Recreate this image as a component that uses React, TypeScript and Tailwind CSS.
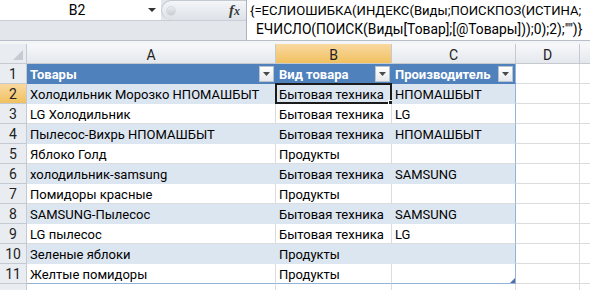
import React from "react";

const rows: [string, string, string][] = [
    ["Холодильник Морозко НПОМАШБЫТ", "Бытовая техника", "НПОМАШБЫТ"],
    ["LG Холодильник", "Бытовая техника", "LG"],
    ["Пылесос-Вихрь НПОМАШБЫТ", "Бытовая техника", "НПОМАШБЫТ"],
    ["Яблоко Голд", "Продукты", ""],
    ["холодильник-samsung", "Бытовая техника", "SAMSUNG"],
    ["Помидоры красные", "Продукты", ""],
    ["SAMSUNG-Пылесос", "Бытовая техника", "SAMSUNG"],
    ["LG пылесос", "Бытовая техника", "LG"],
    ["Зеленые яблоки", "Продукты", ""],
    ["Желтые помидоры", "Продукты", ""],
];

function FilterButton() {
    return (
        <div className="ml-auto mr-[2px] w-[15px] h-[16px] flex items-center justify-center bg-gradient-to-b from-white to-[#e6e9ed] border border-[#b9c3cf]">
            <svg width="7" height="4" viewBox="0 0 7 4">
                <path d="M0 0h7L3.5 4z" fill="#4a4a4a" />
            </svg>
        </div>
    );
}

function RowHeader({ n, active }: { n?: number; active?: boolean }) {
    return (
        <div
            className={`w-[27px] shrink-0 flex items-center justify-center pt-[2px] border-r border-b border-[#c5cad1] text-[14px] text-[#222] ${
                active
                    ? "bg-gradient-to-b from-[#f9d99f] to-[#f1c15f]"
                    : "bg-[#e9ecf0]"
            }`}
        >
            {n}
        </div>
    );
}

export default function App() {
    return (
        <div className="w-[590px] h-[290px] overflow-hidden bg-white font-['Roboto',sans-serif] text-[13px] text-black">
            {/* Formula bar */}
            <div className="flex h-[41px] bg-[#e3e7ec] border-b border-[#b7bec8]">
                <div className="w-[246px] shrink-0 flex flex-col">
                    <div className="flex h-[21px] border-b border-[#c9ced6]">
                        <div className="w-[161px] bg-white flex items-center relative">
                            <span className="flex-1 text-center pl-[6px] text-[14px]">B2</span>
                            <svg width="8" height="4" viewBox="0 0 8 4" className="mr-[5px]">
                                <path d="M0 0h8L4 4z" fill="#333" />
                            </svg>
                        </div>
                        <div className="flex-1 flex items-center rounded-l-[11px] border-l border-t border-[#c3c9d1] bg-gradient-to-b from-[#f4f6f8] to-[#dde2e8]">
                            <div className="ml-[4px] w-[10px] h-[10px] rounded-full bg-gradient-to-b from-[#e9ecef] to-[#c8cdd3] border border-[#d7dbe0]" />
                            <span className="ml-auto mr-[6px] font-['Liberation_Serif',serif] italic font-bold text-[15px] text-[#3a3a3a]">
                                f<span className="text-[12px]">x</span>
                            </span>
                        </div>
                    </div>
                    <div className="flex-1" />
                </div>
                <div className="flex-1 bg-white border-l border-[#a9b2bd] flex flex-col pt-[1px] leading-[19px] whitespace-nowrap overflow-hidden">
                    <div className="pl-[3px] text-[13.1px]">{"{=ЕСЛИОШИБКА(ИНДЕКС(Виды;ПОИСКПОЗ(ИСТИНА;"}</div>
                    <div className="pl-[9px] text-[13.8px]">{'ЕЧИСЛО(ПОИСК(Виды[Товар];[@Товары]));0);2);"")}'}</div>
                </div>
            </div>
            <div className="h-[3px] bg-[#f4f5f7]" />

            {/* Column headers */}
            <div className="flex h-[20px] text-[14px] text-[#222]">
                <div className="w-[27px] shrink-0 relative border-r border-b border-[#c5cad1] bg-[#e9ecf0]">
                    <svg width="10" height="10" viewBox="0 0 10 10" className="absolute right-[3px] bottom-[3px]">
                        <path d="M10 0V10H0z" fill="#c6cbd1" />
                    </svg>
                </div>
                <div className="w-[249px] shrink-0 flex items-center justify-center pt-[3px] border-r border-b border-[#c5cad1] bg-gradient-to-b from-[#f7f8fa] to-[#e4e8ed]">A</div>
                <div className="w-[116px] shrink-0 flex items-center justify-center pt-[3px] border-r border-b border-[#c5cad1] bg-gradient-to-b from-[#f9d99f] to-[#f1c15f]">B</div>
                <div className="w-[124px] shrink-0 flex items-center justify-center pt-[3px] border-r border-b border-[#c5cad1] bg-gradient-to-b from-[#f7f8fa] to-[#e4e8ed]">C</div>
                <div className="w-[64px] shrink-0 flex items-center justify-center pt-[3px] border-r border-b border-[#c5cad1] bg-gradient-to-b from-[#f7f8fa] to-[#e4e8ed]">D</div>
                <div className="flex-1 border-b border-[#c5cad1] bg-gradient-to-b from-[#f7f8fa] to-[#e4e8ed]" />
            </div>

            {/* Row 1: table header */}
            <div className="flex h-[20px]">
                <RowHeader n={1} />
                <div className="w-[249px] shrink-0 flex items-center pl-[3px] bg-[#4f81bd] text-white font-bold border-b border-[#4f81bd]">
                    <span className="pt-[2px]">Товары</span>
                    <FilterButton />
                </div>
                <div className="w-[116px] shrink-0 flex items-center pl-[3px] bg-[#4f81bd] text-white font-bold border-b border-[#4f81bd]">
                    <span className="pt-[2px]">Вид товара</span>
                    <FilterButton />
                </div>
                <div className="w-[124px] shrink-0 flex items-center pl-[3px] bg-[#4f81bd] text-white font-bold border-r border-b border-r-[#95b3d7] border-b-[#4f81bd]">
                    <span className="pt-[2px]">Производитель</span>
                    <FilterButton />
                </div>
                <div className="w-[64px] shrink-0 border-r border-b border-[#dadcdd]" />
                <div className="flex-1 border-b border-[#dadcdd]" />
            </div>

            {/* Data rows */}
            {rows.map((r, i) => {
                const n = i + 2;
                const band = n % 2 === 0;
                const last = n === 11;
                const cell = band
                    ? "bg-[#dce6f1] border-[#dce6f1]"
                    : "bg-white border-[#dadcdd]";
                const bottom = last ? "border-b-[#95b3d7]" : "";
                return (
                    <div key={n} className="flex h-[20px]">
                        <RowHeader n={n} active={n === 2} />
                        <div className={`w-[249px] shrink-0 flex items-center pl-[3px] pt-[3px] border-r border-b whitespace-nowrap ${cell} ${bottom}`}>
                            {r[0]}
                        </div>
                        <div className={`w-[116px] shrink-0 relative flex items-center pl-[3px] pt-[3px] border-r border-b whitespace-nowrap ${cell} ${bottom}`}>
                            {r[1]}
                            {n === 2 && (
                                <div className="absolute -left-[1px] -top-[1px] -right-[1px] -bottom-[1px] border-2 border-[#1b1b1b]">
                                    <div className="absolute -right-[4px] -bottom-[4px] w-[6px] h-[6px] bg-[#1b1b1b] border border-white" />
                                </div>
                            )}
                        </div>
                        <div className={`w-[124px] shrink-0 relative flex items-center pl-[3px] pt-[3px] border-r border-b border-r-[#95b3d7] whitespace-nowrap ${cell} ${bottom}`}>
                            {r[2]}
                            {last && (
                                <svg width="5" height="5" viewBox="0 0 5 5" className="absolute right-[0px] bottom-[0px]">
                                    <path d="M5 0V5H0z" fill="#4f6fa5" />
                                </svg>
                            )}
                        </div>
                        <div className="w-[64px] shrink-0 border-r border-b border-[#dadcdd]" />
                        <div className="flex-1 border-b border-[#dadcdd]" />
                    </div>
                );
            })}

            {/* Row 12 (partial) */}
            <div className="flex h-[20px]">
                <RowHeader />
                <div className="w-[249px] shrink-0 border-r border-[#dadcdd]" />
                <div className="w-[116px] shrink-0 border-r border-[#dadcdd]" />
                <div className="w-[124px] shrink-0 border-r border-[#dadcdd]" />
                <div className="w-[64px] shrink-0 border-r border-[#dadcdd]" />
                <div className="flex-1" />
            </div>
        </div>
    );
}
